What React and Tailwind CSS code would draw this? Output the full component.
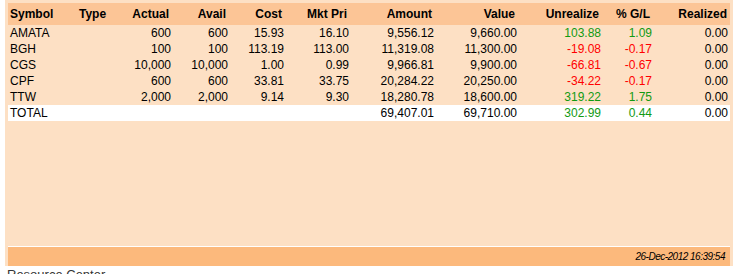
import React from "react";

const cols = [
  { w: "w-[68px]", align: "left", hp: "pl-[2px]", dp: "pl-[2px]" },
  { w: "w-[44px]", align: "left", hp: "pl-[3px]", dp: "pl-[3px]" },
  { w: "w-[52px]", align: "right", hp: "pr-[3px]", dp: "pr-[1px]" },
  { w: "w-[57px]", align: "right", hp: "pr-[3px]", dp: "pr-[1px]" },
  { w: "w-[56px]", align: "right", hp: "pr-[3px]", dp: "pr-[1px]" },
  { w: "w-[65px]", align: "right", hp: "pr-[3px]", dp: "pr-[1px]" },
  { w: "w-[85px]", align: "right", hp: "pr-[3px]", dp: "pr-[1px]" },
  { w: "w-[83px]", align: "right", hp: "pr-[3px]", dp: "pr-[1px]" },
  { w: "w-[84px]", align: "right", hp: "pr-[3px]", dp: "pr-[1px]" },
  { w: "w-[51px]", align: "right", hp: "pr-[3px]", dp: "pr-[1px]" },
  { w: "w-[77px]", align: "right", hp: "pr-[3px]", dp: "pr-[2px]" },
];

const headers = ["Symbol", "Type", "Actual", "Avail", "Cost", "Mkt Pri", "Amount", "Value", "Unrealize", "% G/L", "Realized"];

const rows = [
  ["AMATA", "", "600", "600", "15.93", "16.10", "9,556.12", "9,660.00", "103.88", "1.09", "0.00"],
  ["BGH", "", "100", "100", "113.19", "113.00", "11,319.08", "11,300.00", "-19.08", "-0.17", "0.00"],
  ["CGS", "", "10,000", "10,000", "1.00", "0.99", "9,966.81", "9,900.00", "-66.81", "-0.67", "0.00"],
  ["CPF", "", "600", "600", "33.81", "33.75", "20,284.22", "20,250.00", "-34.22", "-0.17", "0.00"],
  ["TTW", "", "2,000", "2,000", "9.14", "9.30", "18,280.78", "18,600.00", "319.22", "1.75", "0.00"],
];

const total = ["TOTAL", "", "", "", "", "", "69,407.01", "69,710.00", "302.99", "0.44", "0.00"];

function colorFor(i, v) {
  if (i === 8 || i === 9) {
    return v.startsWith("-") ? "text-[#ff0000]" : "text-[#129a12]";
  }
  return "text-black";
}

function Row({ data, bg }) {
  return (
    <div className={`flex h-[16px] items-center leading-[16px] ${bg}`}>
      {data.map((v, i) => (
        <div
          key={i}
          className={`${cols[i].w} shrink-0 ${cols[i].dp} ${cols[i].align === "right" ? "text-right" : "text-left"} ${colorFor(i, v)} whitespace-nowrap`}
        >
          {v}
        </div>
      ))}
    </div>
  );
}

export default function App() {
  return (
    <div className="w-[740px] h-[274px] overflow-hidden bg-white" style={{ fontFamily: '"Liberation Sans", Arial, sans-serif' }}>
      <div className="ml-[5px] w-[728px] h-[266px] bg-[#fde0c4] pt-[3px] px-[3px] flex flex-col">
        <div className="w-[722px] text-[12px]">
          <div className="flex h-[22px] items-center bg-[#fcc596] font-bold text-black">
            {headers.map((h, i) => (
              <div
                key={i}
                className={`${cols[i].w} shrink-0 ${cols[i].hp} ${cols[i].align === "right" ? "text-right" : "text-left"} whitespace-nowrap`}
              >
                {h}
              </div>
            ))}
          </div>
          {rows.map((r, i) => (
            <Row key={i} data={r} bg="" />
          ))}
          <Row data={total} bg="bg-white" />
        </div>
        <div className="flex-1" />
        <div className="h-[1px] bg-white w-[722px]" />
        <div className="h-[19px] w-[722px] bg-[#fcb97c] flex items-center justify-end pr-[5px]">
          <span className="italic text-[10px] tracking-[-0.5px] text-black">26-Dec-2012 16:39:54</span>
        </div>
      </div>
      <div className="pl-[7px] mt-[1px] text-[13px] leading-[15px] text-[#333333]">Resource Center</div>
    </div>
  );
}
